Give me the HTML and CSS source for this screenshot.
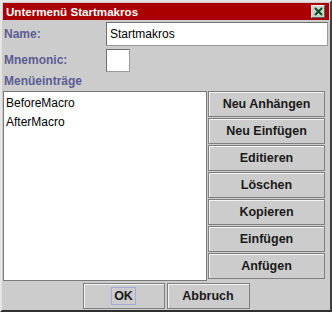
FILE: index.html
```html
<!DOCTYPE html>
<html>
<head>
	<title>Untermenü Startmakros</title>
	<link rel="stylesheet" href="styles.css">
</head>
<body>
	<div class="window">
		<div class="titlebar">
			<span class="title">Untermenü Startmakros</span>
			<span class="close-btn">
				<svg width="11" height="11" viewBox="0 0 11 11">
					<path d="M2 2 L9 9 M9 2 L2 9" stroke="#0b4d22" stroke-width="2" fill="none"/>
				</svg>
			</span>
		</div>

		<div class="form-row name-row">
			<label class="field-label">Name:</label>
			<div class="text-input">Startmakros</div>
		</div>
		<div class="form-row mnemonic-row">
			<label class="field-label">Mnemonic:</label>
			<div class="mnemonic-input"></div>
		</div>
		<div class="section-label">Menüeinträge</div>

		<div class="main-area">
			<ul class="entry-list">
				<li>BeforeMacro</li>
				<li>AfterMacro</li>
			</ul>
			<div class="side-buttons">
				<button class="btn">Neu Anhängen</button>
				<button class="btn">Neu Einfügen</button>
				<button class="btn">Editieren</button>
				<button class="btn">Löschen</button>
				<button class="btn">Kopieren</button>
				<button class="btn">Einfügen</button>
				<button class="btn">Anfügen</button>
			</div>
		</div>

		<div class="footer">
			<button class="btn footer-btn"><span class="focus">OK</span></button>
			<button class="btn footer-btn abort-btn">Abbruch</button>
		</div>
	</div>
</body>
</html>
```

FILE: styles.css
```css
html, body {
	margin: 0;
	padding: 0;
	background-color: #cccccc;
}
body {
	font-family: "Liberation Sans", Arial, sans-serif;
	font-size: 12px;
}
.window {
	box-sizing: border-box;
	width: 332px;
	height: 312px;
	background-color: #cccccc;
	border-top: 2px solid #e6e6e6;
	border-left: 2px solid #e6e6e6;
	border-right: 2px solid #404040;
	border-bottom: 2px solid #303030;
	display: flex;
	flex-direction: column;
}
.titlebar {
	margin: 1px 1px 0 1px;
	height: 17px;
	background-color: #aa0000;
	display: flex;
	align-items: center;
	justify-content: space-between;
	padding: 0 3px 0 3px;
}
.title {
	color: #fff;
	font-weight: bold;
	font-size: 11.6px;
}
.close-btn {
	box-sizing: border-box;
	width: 14px;
	height: 13px;
	background-color: #c8d4c8;
	border-top: 1px solid #f0f0f0;
	border-left: 1px solid #f0f0f0;
	border-right: 1px solid #606060;
	border-bottom: 1px solid #606060;
	display: flex;
	align-items: center;
	justify-content: center;
	margin-right: 1px;
}
.form-row {
	display: flex;
	align-items: center;
	padding-left: 2px;
}
.name-row {
	margin-top: 2px;
	height: 24px;
}
.mnemonic-row {
	margin-top: 2px;
	height: 24px;
}
.field-label {
	width: 102px;
	color: #5c5c94;
	font-weight: bold;
}
.text-input {
	box-sizing: border-box;
	width: 222px;
	height: 24px;
	background-color: #fff;
	border: 1px solid #6e6e6e;
	border-right-color: #9a9a9a;
	border-bottom-color: #9a9a9a;
	padding: 4px 0 0 3px;
	color: #000;
}
.mnemonic-input {
	box-sizing: border-box;
	width: 24px;
	height: 23px;
	background-color: #fff;
	border: 1px solid #6e6e6e;
	border-right-color: #9a9a9a;
	border-bottom-color: #9a9a9a;
}
.section-label {
	height: 19px;
	line-height: 19px;
	padding-left: 2px;
	color: #5c5c94;
	font-weight: bold;
}
.main-area {
	display: flex;
	height: 189px;
	padding-left: 1px;
}
.entry-list {
	box-sizing: border-box;
	list-style: none;
	margin: 0;
	width: 204px;
	height: 190px;
	background-color: #fff;
	border: 1px solid #7a7a7a;
	padding: 4px 0 0 2px;
}
.entry-list li {
	height: 19px;
	line-height: 14px;
}
.side-buttons {
	display: flex;
	flex-direction: column;
	gap: 1px;
	margin-left: 1px;
}
.btn {
	box-sizing: border-box;
	width: 117px;
	height: 26px;
	background-color: #cccccc;
	border: 1px solid #7f7f7f;
	box-shadow: inset 1px 1px 0 #f4f4f4;
	font-family: "Liberation Sans", Arial, sans-serif;
	font-size: 12.5px;
	font-weight: bold;
	color: #1a1a1a;
	padding: 0;
	margin: 0;
}
.footer {
	display: flex;
	justify-content: center;
	gap: 2px;
	margin-top: 3px;
}
.footer-btn {
	width: 82px;
}
.abort-btn {
	width: 83px;
}
.focus {
	display: inline-block;
	padding: 1px 2px;
	border: 1px solid #a8a8d8;
}
```
